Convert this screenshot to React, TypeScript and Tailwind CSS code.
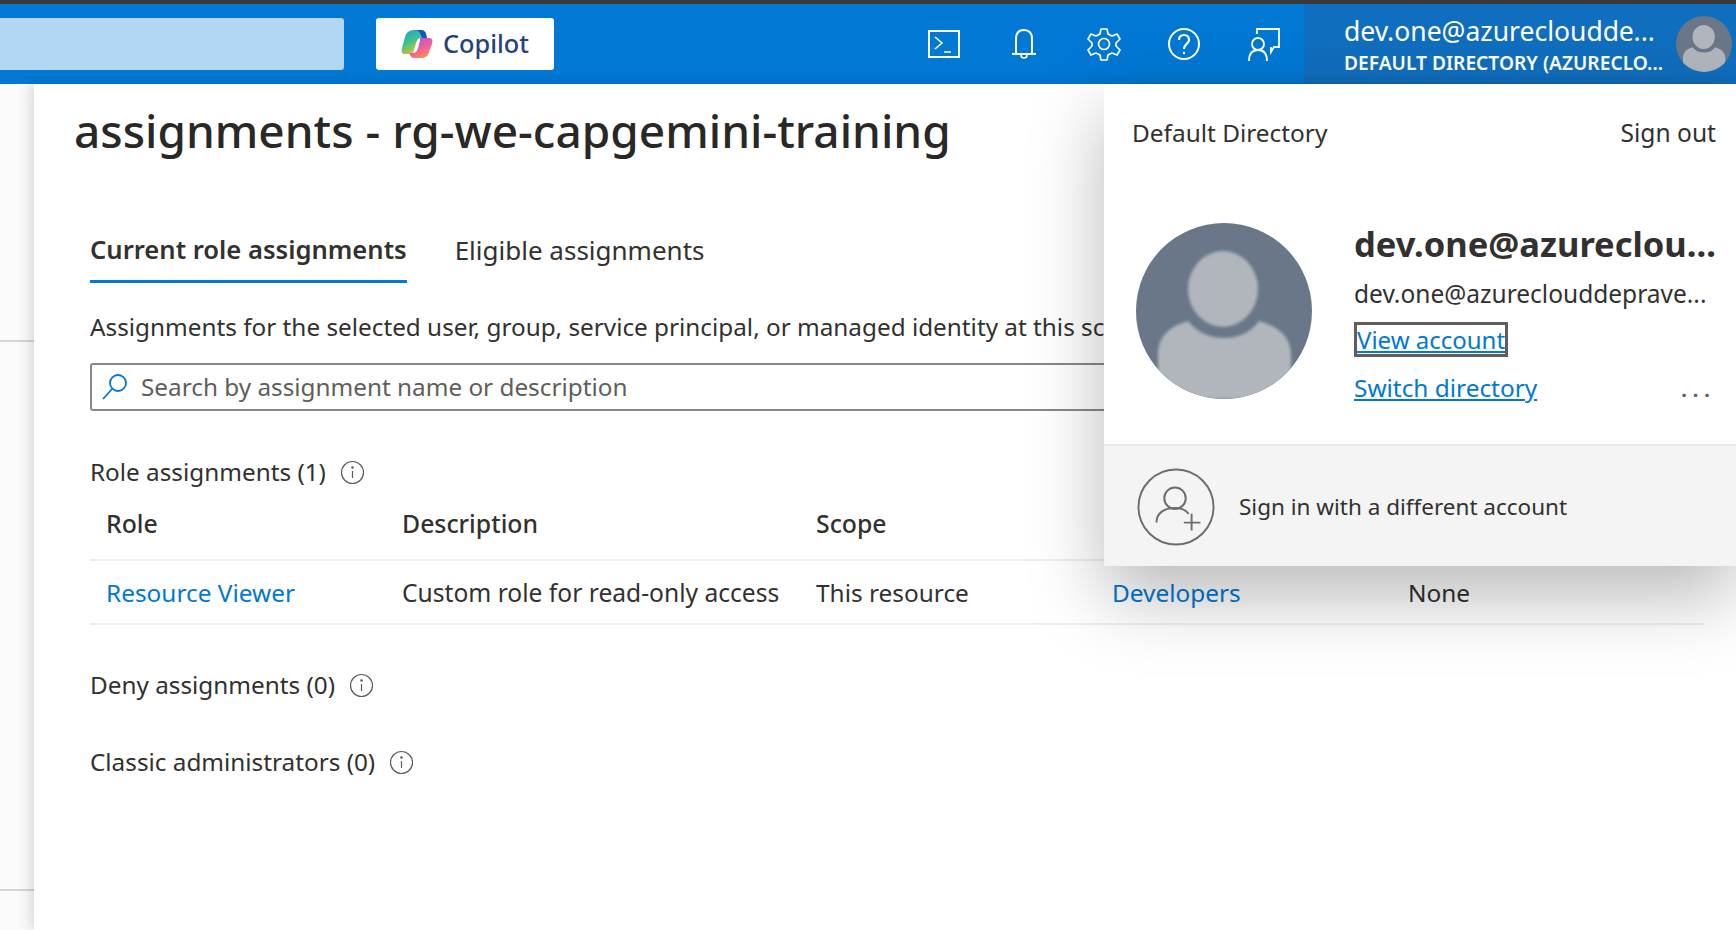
import { useId } from "react";

const font = { fontFamily: '"Noto Sans", sans-serif' };

function CopilotLogo() {
  const id = useId();
  return (
    <svg width="32" height="30" viewBox="0 0 32 30">
      <defs>
        <linearGradient id={`${id}a`} x1="0" y1="0" x2="0.6" y2="1">
          <stop offset="0" stopColor="#1b9de2" />
          <stop offset="0.5" stopColor="#3ec28a" />
          <stop offset="1" stopColor="#f5c518" />
        </linearGradient>
        <linearGradient id={`${id}b`} x1="0.2" y1="0" x2="0.8" y2="1">
          <stop offset="0" stopColor="#a855e8" />
          <stop offset="0.55" stopColor="#f0609a" />
          <stop offset="1" stopColor="#fb9a3c" />
        </linearGradient>
      </defs>
      <path d="M13 1h8c2 0 3 1 4 4l1 4h-6c-3 0-4 2-5 5l-2 7c-1 3-2 4-5 4H4c-3 0-4-2-3-6l3-11c1-4 4-7 9-7z" fill={`url(#${id}a)`} />
      <path d="M13 1h7c2 0 4 1 5 4l1 4h-5l-2-5c-1-2-3-3-6-3z" fill="#1554c4" />
      <path d="M19 9h9c3 0 4 2 3 6l-3 8c-1 4-4 6-8 6h-7c-2 0-3-1-4-3l-1-2h4c3 0 4-2 5-5l2-7c0-2 0-3 0-3z" fill={`url(#${id}b)`} />
    </svg>
  );
}

function InfoIcon() {
  return (
    <svg width="25" height="25" viewBox="0 0 25 25" fill="none" stroke="#605e5c" strokeWidth="1.2">
      <circle cx="12.5" cy="12.5" r="11" />
      <path d="M12.5 11v7" />
      <circle cx="12.5" cy="7.5" r="0.7" fill="#605e5c" />
    </svg>
  );
}

function HeaderIcons() {
  return (
    <div className="flex items-center gap-[40px] text-white">
      <svg width="40" height="40" viewBox="0 0 40 40" fill="none" stroke="currentColor" strokeWidth="2">
        <rect x="5" y="7" width="30" height="26" />
        <path d="M11 13l7 6-7 6M20 28h7" strokeWidth="1.6" />
      </svg>
      <svg width="40" height="40" viewBox="0 0 40 40" fill="none" stroke="currentColor" strokeWidth="2">
        <path d="M12 29V15c0-6 3-9 8-9s8 3 8 9v14" />
        <path d="M8 30h24" />
        <path d="M17 31c0 2 1 3 3 3s3-1 3-3" strokeWidth="1.6" />
      </svg>
      <svg width="40" height="40" viewBox="0 0 40 40" fill="none" stroke="currentColor" strokeWidth="1.7" strokeLinejoin="round">
        <path d="M17 5h6l1 5 4 2 5-2 3 5-4 4v3l4 4-3 5-5-2-4 2-1 5h-6l-1-5-4-2-5 2-3-5 4-4v-3l-4-4 3-5 5 2 4-2z" />
        <circle cx="20" cy="20" r="5.5" />
      </svg>
      <svg width="40" height="40" viewBox="0 0 40 40" fill="none" stroke="currentColor" strokeWidth="2">
        <circle cx="20" cy="20" r="15" />
        <path d="M15 16c0-3 2-5 5-5s5 2 5 5c0 4-5 4-5 9" strokeWidth="2.2" />
        <circle cx="20" cy="29" r="1.2" fill="currentColor" stroke="none" />
      </svg>
      <svg width="40" height="40" viewBox="0 0 40 40" fill="none" stroke="currentColor" strokeWidth="1.8">
        <path d="M13 10V5h22v18h-5l-3 5v-5" />
        <circle cx="14" cy="20" r="6" />
        <path d="M5 37c0-8 3-11 9-11s9 3 9 11" />
      </svg>
    </div>
  );
}

function Avatar({ size }: { size: number }) {
  const id = useId();
  return (
    <svg width={size} height={size} viewBox="0 0 176 176" className="shrink-0">
      <defs>
        <clipPath id={id}>
          <circle cx="88" cy="88" r="88" />
        </clipPath>
        <filter id={`${id}f`}>
          <feGaussianBlur stdDeviation="1.5" />
        </filter>
      </defs>
      <circle cx="88" cy="88" r="88" fill="#697789" />
      <g clipPath={`url(#${id})`} filter={`url(#${id}f)`} fill="#b0b6bb">
        <ellipse cx="87" cy="66" rx="35" ry="38" />
        <path d="M22 176v-44c0-18 10-28 30-34 10 12 22 17 36 17s26-5 35-17c20 6 32 16 32 34v44z" />
      </g>
    </svg>
  );
}

function Header() {
  return (
    <header className="flex h-[80px] shrink-0 items-center bg-[#0078d4]">
      <div className="h-[52px] w-[344px] rounded-r-[3px] bg-[#b3d6f2]" />
      <button className="ml-[32px] flex h-[52px] w-[178px] items-center justify-center gap-[10px] rounded-[3px] bg-white text-[25.3px] font-medium text-[#24437c]">
        <CopilotLogo />
        <span>Copilot</span>
      </button>
      <div className="ml-auto flex h-full items-center">
        <HeaderIcons />
        <div className="ml-[20px] flex h-full w-[432px] items-center bg-[#106ebe] pl-[40px] text-white">
          <div className="w-[320px] shrink-0">
            <div className="whitespace-nowrap text-[26.5px] leading-[36px]">dev.one@azureclouddе...</div>
            <div className="mt-[1px] whitespace-nowrap text-[19.2px] leading-[26px] font-semibold">DEFAULT DIRECTORY (AZURECLO...</div>
          </div>
          <div className="ml-[12px]">
            <Avatar size={56} />
          </div>
        </div>
      </div>
    </header>
  );
}

function AccountPopup() {
  return (
    <div className="absolute top-[84px] right-0 z-20 flex h-[482px] w-[632px] flex-col bg-white text-[#323130] shadow-[0_30px_70px_rgba(0,0,0,0.28)]">
      <div className="flex items-center justify-between pt-[30px] pr-[20px] pl-[28px] text-[24.4px] leading-[38px]">
        <span>Default Directory</span>
        <span className="text-[24.6px]">Sign out</span>
      </div>
      <div className="flex flex-1 pt-[71px] pl-[32px]">
        <Avatar size={176} />
        <div className="ml-[42px] flex-1">
          <div className="mt-[1px] whitespace-nowrap text-[34.5px] leading-[40px] font-bold">dev.one@azureclou...</div>
          <div className="mt-[14px] whitespace-nowrap text-[24.5px] leading-[32px]">dev.one@azureclouddeprave...</div>
          <a className="mt-[12px] block w-fit border-[3px] border-[#605e5c] text-[24px] leading-[29px] text-[#0078d4] underline">View account</a>
          <div className="mt-[13px] flex items-center justify-between pr-[20px]">
            <a className="text-[24.4px] leading-[36px] text-[#0078d4] underline">Switch directory</a>
            <span className="mt-[3px] text-[20px] leading-none font-bold tracking-[6px] text-[#605e5c]">...</span>
          </div>
        </div>
      </div>
      <div className="flex h-[122px] items-center gap-[24px] border-t-2 border-[#eaeaea] bg-[#f4f4f4] pt-[2px] pl-[33px]">
        <svg width="78" height="78" viewBox="0 0 80 80" fill="none" stroke="#6f6d6b" strokeWidth="2">
          <circle cx="40" cy="40" r="38.5" />
          <circle cx="39" cy="31" r="11" />
          <path d="M20 56c0-10 8-15 19-15 6 0 11 2 14 6" />
          <path d="M56 47v17M48 56h17" />
        </svg>
        <span className="text-[22.5px] text-[#323130]">Sign in with a different account</span>
      </div>
    </div>
  );
}

function SectionTitle({ label }: { label: string }) {
  return (
    <div className="flex items-center gap-[14px] text-[24.3px] leading-[34px] text-[#323130]">
      <span>{label}</span>
      <InfoIcon />
    </div>
  );
}

const columns = "grid grid-cols-[296px_414px_296px_296px_1fr] pl-[16px]";

function Blade() {
  return (
    <main className="relative z-10 flex-1 bg-white pl-[40px] text-[#323130] shadow-[-4px_0_12px_rgba(0,0,0,0.14)]">
      <h1 className="mt-[15px] whitespace-nowrap text-[46px] leading-[62px] font-medium text-[#292827]">
        assignments - rg-we-capgemini-training
      </h1>
      <div className="pr-[32px] pl-[16px]">
        <div className="mt-[71px] flex gap-[48px] leading-[36px]">
          <div className="border-b-[3px] border-[#0078d4] pb-[12px] text-[25.6px] font-semibold">Current role assignments</div>
          <div className="text-[26px]">Eligible assignments</div>
        </div>
        <p className="mt-[27px] whitespace-nowrap text-[24.3px] leading-[34px]">
          Assignments for the selected user, group, service principal, or managed identity at this scope.
        </p>
        <div className="mt-[19px] flex h-[48px] items-center gap-[11px] rounded-[3px] border-2 border-[#8a8886] pl-[8px] text-[24.3px] text-[#605e5c]">
          <svg width="30" height="30" viewBox="0 0 30 30" fill="none" stroke="#0078d4" strokeWidth="1.8">
            <circle cx="18" cy="11" r="8" />
            <path d="M12 17L3 27" />
          </svg>
          <span>Search by assignment name or description</span>
        </div>
        <div className="mt-[44px]">
          <SectionTitle label="Role assignments (1)" />
        </div>
        <div className={`${columns} mt-[17px] h-[55px] items-start border-b-2 border-[#eeeeee] text-[24.8px] leading-[34px] font-medium`}>
          <span>Role</span>
          <span>Description</span>
          <span>Scope</span>
        </div>
        <div className={`${columns} h-[64px] items-center border-b-2 border-[#eeeeee] pt-[2px] text-[24.4px]`}>
          <a className="text-[#0078d4]">Resource Viewer</a>
          <span className="text-[24.6px]">Custom role for read-only access</span>
          <span>This resource</span>
          <a className="text-[#0078d4]">Developers</a>
          <span>None</span>
        </div>
        <div className="mt-[43px]">
          <SectionTitle label="Deny assignments (0)" />
        </div>
        <div className="mt-[43px]">
          <SectionTitle label="Classic administrators (0)" />
        </div>
      </div>
    </main>
  );
}

export default function App() {
  return (
    <div className="relative flex h-[930px] w-[1736px] flex-col overflow-hidden bg-white" style={font}>
      <div className="h-[4px] shrink-0 bg-[#3b3a39]" />
      <Header />
      <div className="flex flex-1">
        <aside className="w-[34px] shrink-0 bg-[#fbfbfb]">
          <div className="h-[258px] border-b-2 border-[#d6d6d6]" />
          <div className="h-[549px] border-b-2 border-[#d6d6d6]" />
        </aside>
        <Blade />
      </div>
      <AccountPopup />
    </div>
  );
}
